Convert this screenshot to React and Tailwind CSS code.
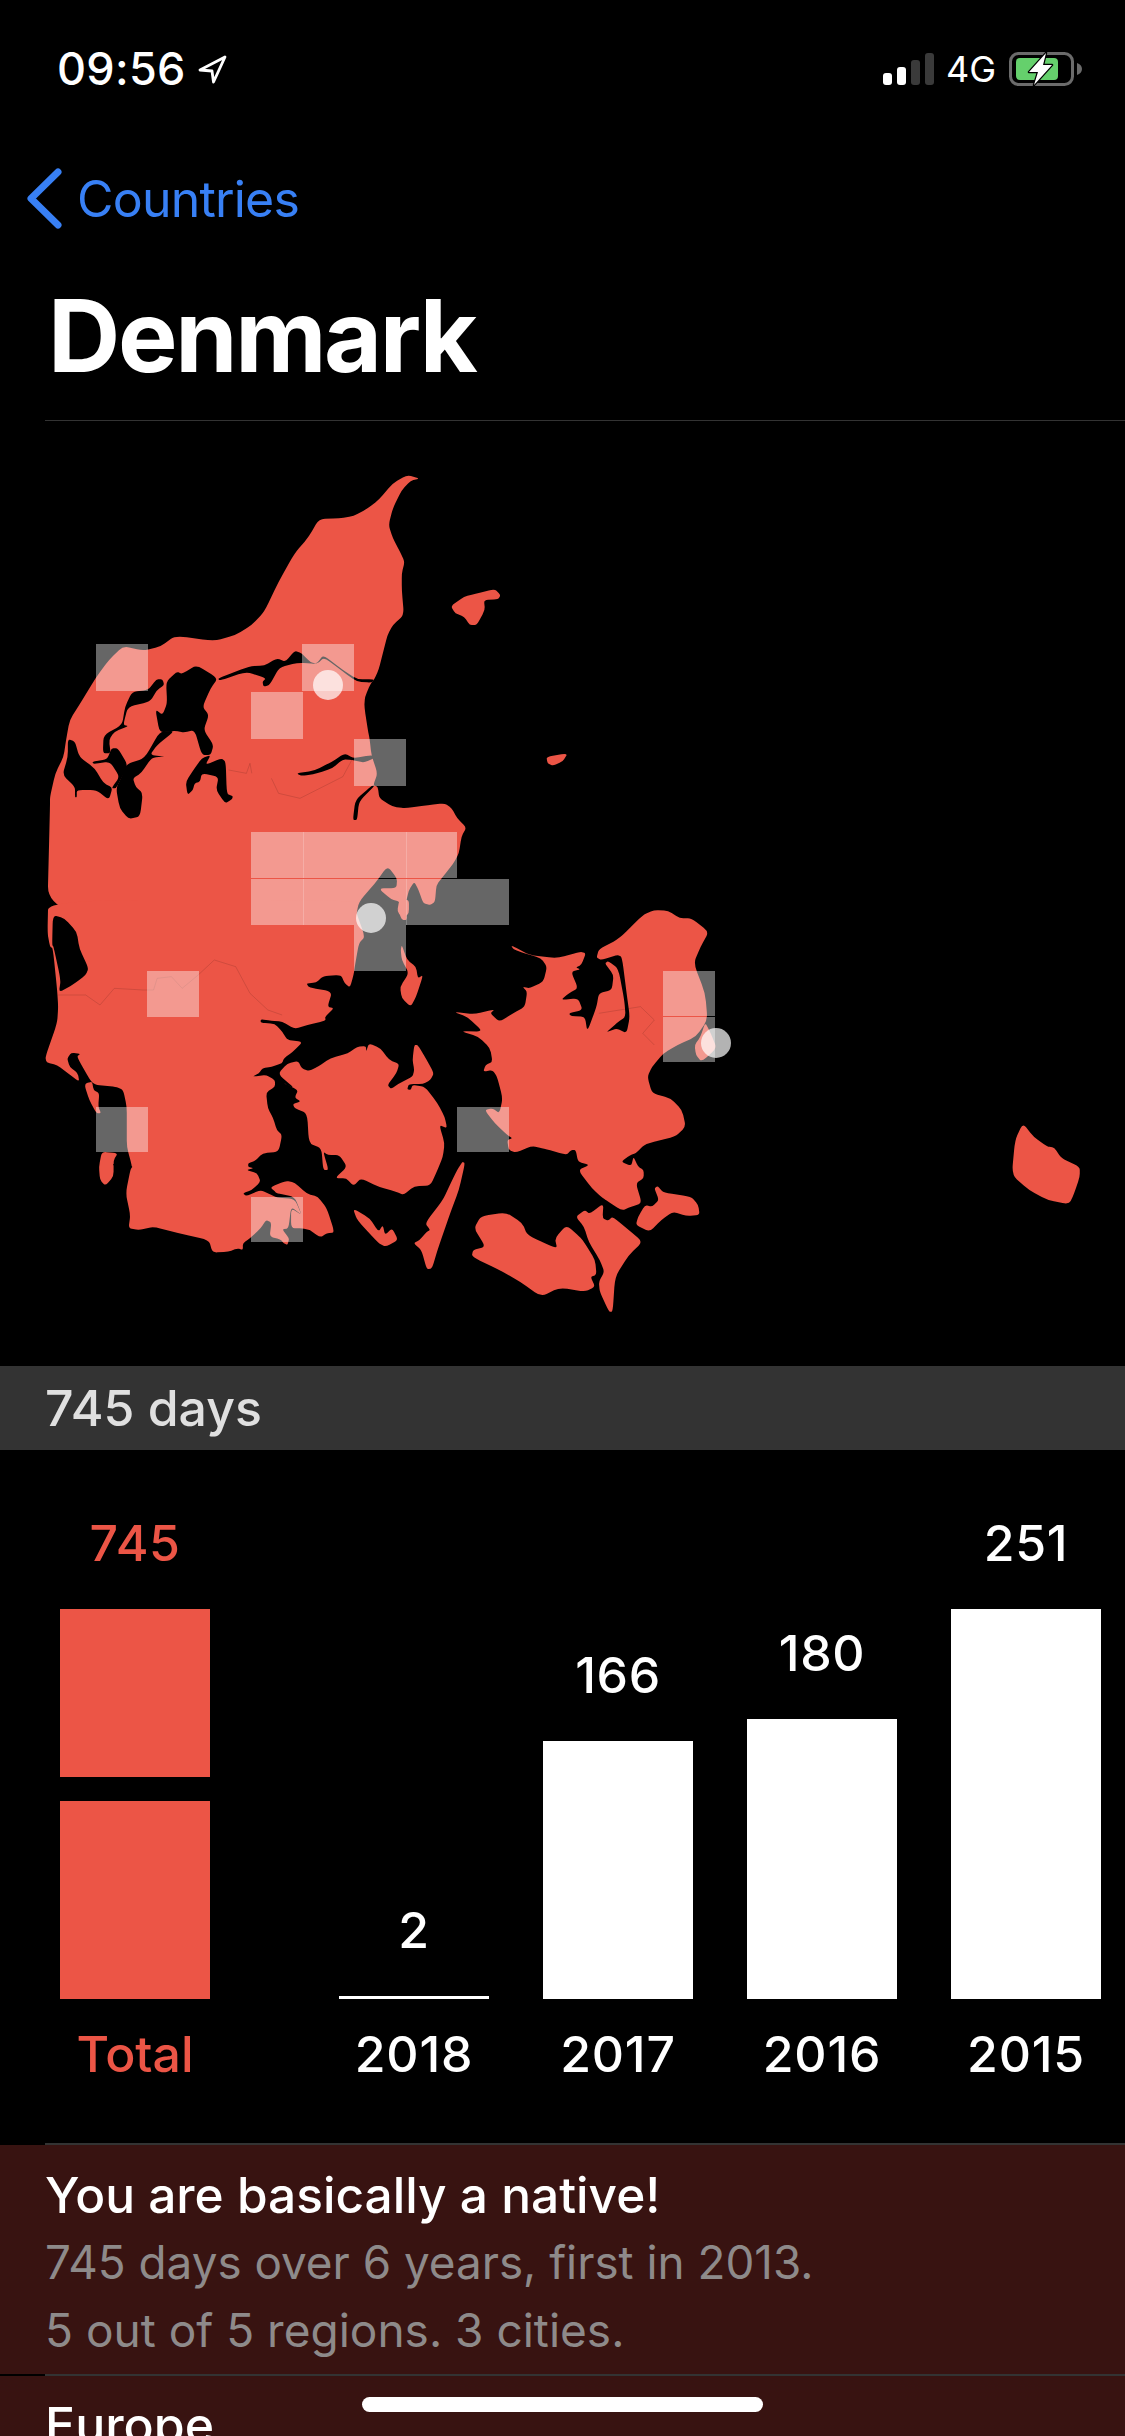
const RED = "#ec5546";

// map outlines are traced per crop, each group has its own transform
const TOP = "translate(0 440) scale(0.35714 0.33333)";
const LOW = "translate(0 900) scale(0.35714 0.33333)";
const EAST = "translate(400 860) scale(0.46243 0.33333)";

const topLand = [
  "1175,116 1150,122 1125,150 1100,205 1088,255 1100,295 1120,335 1133,365 1125,400 1125,450 1131,525 1100,555 1085,585 1072,640 1060,690 1048,718 1038,730 1022,770 1020,800 1030,870 1035,897 1040,945 1057,1000 1045,1036 1058,1040 1062,1075 1100,1100 1135,1105 1200,1095 1245,1090 1265,1105 1280,1135 1306,1162 1292,1190 1285,1240 1270,1270 1240,1310 1222,1335 1218,1385 1205,1395 1185,1390 1172,1350 1160,1325 1145,1350 1135,1395 1140,1440 1125,1440 1115,1410 1120,1385 1095,1378 1060,1345 1110,1345 1112,1315 1085,1278 1050,1330 1005,1385 995,1440 132,1440 140,1100 140,1070 155,1000 178,950 185,900 195,840 225,790 270,710 305,660 345,618 400,632 450,620 490,587 600,603 660,585 705,555 740,515 780,425 825,340 865,290 893,237 950,235 990,228 1030,205 1060,180 1100,130 1140,105",
  "1262,498 1300,470 1330,462 1385,447 1402,465 1395,478 1355,480 1358,510 1335,555 1315,555 1300,530 1275,520",
  "1530,950 1590,940 1575,965 1548,977 1533,970",
];

const topWater = [
  "610,715 550,675 510,702 495,695 465,725 468,790 455,825 435,808 447,878 490,872 515,878 545,870 565,945 590,945 598,915 570,870 585,825 567,800 590,745",
  "447,875 490,872 440,915 420,945 465,950 425,952 395,1000 372,1015 380,1040 400,1060 392,1130 360,1137 335,1105 325,1045 340,1012 355,972 405,955",
  "190,897 210,905 222,950 265,985 290,1030 315,1042 305,1080 270,1050 215,1050 215,1072 210,1072 210,1040 175,1005 190,950",
  "258,965 300,958 312,925 330,925 358,975 340,1015 325,1045 312,1045 335,1010 308,965 262,972",
  "370,755 415,750 438,718 455,718 460,735 440,750 420,785 358,800 345,855 360,858 320,875 305,900 310,940 288,940 290,885 342,855 350,800",
  "565,955 590,945 575,975 620,955 632,965 635,1062 652,1068 650,1078 630,1090 605,1050 612,1010 565,1000 560,1025 545,1030 540,1050 525,1065 520,1025 545,985",
  "610,715 700,678 740,677 775,655 800,665 825,632 845,640 870,668 888,670 905,645 960,690 1000,718 1048,718 1040,728 1000,725 960,695 908,652 888,672 835,668 782,682 755,735 738,740 735,725 745,715 690,695 615,722",
  "830,1000 880,992 930,965 965,940 990,955 1040,945 1052,952 1020,968 985,960 960,958 930,985 890,1000 845,1008",
  "1040,1038 1050,1036 1005,1085 1000,1140 988,1140 995,1080",
];

const lowLand = [
  "135,0 1005,0 995,30 1022,110 1005,130 995,190 990,225 980,262 965,250 955,225 905,228 885,248 858,250 865,262 930,275 917,320 935,325 910,350 912,362 860,375 825,387 790,365 760,362 730,358 730,368 770,372 790,395 805,420 848,425 820,455 795,475 790,490 760,500 735,505 725,520 706,530 745,525 770,540 770,560 745,578 750,625 765,655 775,690 790,705 780,755 735,760 715,782 695,790 695,800 710,805 690,810 720,820 730,845 705,870 680,880 690,888 730,870 760,885 775,893 825,897 845,945 815,920 808,985 790,988 810,1015 805,1035 795,1030 785,1018 755,1010 760,968 745,960 730,985 700,1015 680,1030 680,1050 665,1045 640,1055 595,1058 585,1020 500,1000 430,980 390,990 360,985 365,945 352,880 365,810 370,800 355,740 355,680 355,620 345,570 325,560 270,555 255,545 215,470 225,462 200,458 188,475 195,500 218,520 222,545 190,520 160,495 130,488 127,470 160,370 163,320 160,270 148,145 140,140 133,100",
  "1125,0 1145,0 1145,40 1130,55 1112,35 1118,0",
  "240,550 258,545 262,570 278,580 275,620 283,640 270,640 250,600 238,560",
  "285,755 330,760 318,780 318,830 295,857 280,840 277,800",
  "757,862 800,842 825,848 860,882 890,890 915,925 937,997 915,1000 897,1012 860,985 858,975 880,978 905,1002 850,985 815,985 815,925 845,945 825,890 775,880 770,875",
  "778,522 805,490 835,483 845,505 865,513 890,500 925,475 975,460 1000,440 1025,438 1025,455 1033,430 1065,445 1090,480 1118,492 1110,520 1085,555 1095,567 1115,552 1155,530 1160,510 1155,480 1160,435 1170,435 1195,480 1215,520 1205,540 1185,552 1145,552 1140,568 1150,570 1155,555 1190,560 1225,610 1245,650 1252,685 1230,675 1245,730 1240,770 1225,810 1205,857 1160,858 1130,885 1110,875 1060,860 1010,835 990,858 970,835 938,835 972,800 950,765 918,765 905,755 920,810 905,810 900,745 865,730 860,640 825,625 820,612 842,605 825,592 835,570 790,547 825,565",
  "1295,785 1302,790 1285,870 1262,935 1225,1050 1210,1105 1195,1108 1180,1050 1158,1030 1175,1020 1195,995 1205,990 1190,970 1240,900 1262,850 1280,810",
  "988,925 1035,955 1060,995 1072,975 1078,1005 1098,985 1115,1020 1080,1040 1060,1030 1000,960",
  "1125,135 1140,180 1165,200 1170,235 1185,225 1165,290 1150,320 1125,295 1120,260 1145,220 1125,180 1122,150",
];

const lowWater = [
  "148,45 180,55 215,95 222,145 248,205 240,225 210,250 165,278 170,240 150,140 146,135",
  "317,791 370,798 370,803 317,797",
];

const eastLand = [
  "240,255 280,285 340,295 390,275 402,280 392,315 380,322 390,328 370,335 385,385 365,400 348,420 385,415 395,450 365,460 370,468 400,470 405,515 425,440 430,400 458,390 462,345 443,310 450,303 472,325 485,420 488,470 470,488 445,518 468,505 490,520 497,470 490,400 480,290 470,285 435,300 425,293 430,268 475,235 525,165 550,150 580,152 605,175 630,175 668,215 650,260 635,310 660,400 665,480 640,530 600,555 570,580 545,620 535,650 545,700 585,715 610,750 618,800 595,830 530,852 510,880 498,885 478,905 500,918 505,890 515,920 527,930 527,955 510,970 523,1030 500,1040 480,1052 445,1020 435,1010 415,985 385,930 410,915 385,905 380,870 370,870 360,885 310,865 285,858 250,878 235,870 232,840 243,835 232,825 205,790 183,750 200,745 215,760 222,715 210,650 200,630 180,635 185,615 200,605 195,565 170,530 130,513 180,515 145,470 115,455 160,463 205,448 195,460 215,485 245,460 270,440 275,395 265,380 280,385 310,365 318,320 305,295 270,280 245,268",
  "660,487 672,520 685,565 652,605 640,585 637,555 650,530",
  "175,1068 230,1057 265,1090 275,1125 340,1167 335,1135 360,1095 392,1135 402,1155 422,1200 425,1245 412,1250 422,1280 400,1295 345,1283 305,1310 260,1265 215,1230 155,1190 158,1170 185,1160 160,1105",
  "380,1070 400,1050 410,1062 440,1030 438,1075 450,1082 460,1070 490,1105 525,1145 495,1185 465,1250 460,1355 452,1355 432,1295 430,1265 442,1235 432,1200 408,1145 398,1100",
  "510,1095 515,1070 530,1035 545,1040 560,1020 550,985 557,978 570,998 630,1010 645,1035 648,1065 620,1068 590,1055 565,1080 540,1115",
  "1347,790 1370,830 1400,860 1415,862 1430,895 1470,920 1470,950 1458,1000 1447,1033 1400,1020 1360,990 1323,945 1330,840",
];

// faint region borders on the land
const borders = [
  { transform: LOW, points: "163,285 240,285 280,315 320,265 400,270 430,270 440,235 480,230 510,265 555,225 600,180 660,200 700,280 750,330 790,345" },
  { transform: TOP, points: "985,960 960,1010 840,1075 780,1060 760,1015" },
  { transform: TOP, points: "640,990 690,1000 700,970 705,1000" },
  { transform: EAST, points: "430,460 520,440 550,480 525,520 550,555" },
];

// visited grid cells [x, y, w, h]
const cells = [
  [96, 644, 52, 47],
  [302, 644, 52, 47],
  [251, 692, 52, 47],
  [354, 739, 52, 47],
  [251, 832, 52.5, 46],
  [303, 832, 103.5, 46],
  [406, 832, 51, 46],
  [251, 879, 52.5, 46],
  [303, 879, 103.5, 46],
  [406, 879, 103, 46],
  [354, 925, 52, 46],
  [147, 971, 52, 46],
  [96, 1107, 52, 45],
  [457, 1107, 52, 45],
  [251, 1197, 52, 45],
  [663, 971, 52, 45],
  [663, 1017, 52, 45],
];

const cities = [
  [328, 685],
  [371, 918],
  [716, 1043],
];

const years = [
  { label: "2018", value: 2, height: 3 },
  { label: "2017", value: 166, height: 258 },
  { label: "2016", value: 180, height: 280 },
  { label: "2015", value: 251, height: 390 },
];

// rounds the corners of a traced outline so the coast does not look faceted
function smooth(points) {
  const pts = points.split(" ").map((p) => p.split(",").map(Number));
  const n = pts.length;
  const cut = 0.3;
  let d = "";
  pts.forEach((p, i) => {
    const prev = pts[(i + n - 1) % n];
    const next = pts[(i + 1) % n];
    const ax = p[0] + (prev[0] - p[0]) * cut;
    const ay = p[1] + (prev[1] - p[1]) * cut;
    const bx = p[0] + (next[0] - p[0]) * cut;
    const by = p[1] + (next[1] - p[1]) * cut;
    d += `${i === 0 ? "M" : "L"}${ax} ${ay}Q${p[0]} ${p[1]} ${bx} ${by}`;
  });
  return d + "Z";
}

function Shapes({ transform, items, fill }) {
  return (
    <g transform={transform} fill={fill}>
      {items.map((points, i) => (
        <path key={i} d={smooth(points)} />
      ))}
    </g>
  );
}

function DenmarkMap() {
  return (
    <svg className="block w-[1125px] h-[945px]" viewBox="0 421 1125 945">
      <Shapes transform={TOP} items={topLand} fill={RED} />
      <Shapes transform={LOW} items={lowLand} fill={RED} />
      <Shapes transform={EAST} items={eastLand} fill={RED} />
      <Shapes transform={TOP} items={topWater} fill="#000" />
      <Shapes transform={LOW} items={lowWater} fill="#000" />
      {borders.map((b, i) => (
        <polyline
          key={i}
          transform={b.transform}
          points={b.points}
          fill="none"
          stroke="#000"
          strokeOpacity="0.12"
          strokeWidth="1"
          vectorEffect="non-scaling-stroke"
        />
      ))}
      {cells.map(([x, y, w, h], i) => (
        <rect key={i} x={x} y={y} width={w} height={h} fill="#fff" fillOpacity="0.4" />
      ))}
      {cities.map(([cx, cy], i) => (
        <ellipse key={i} cx={cx} cy={cy} rx="15" ry="15" fill="#fff" fillOpacity="0.7" />
      ))}
    </svg>
  );
}

function StatusBar() {
  return (
    <div className="flex items-center justify-between h-[34px] mt-[52px] pl-[57px] pr-[43px]">
      <div className="flex items-center">
        <span className="text-[45px] leading-[34px] font-medium text-white tracking-[0.3px]">09:56</span>
        <svg className="ml-[12px]" width="29" height="29" viewBox="0 0 29 29" fill="none" stroke="#fff" strokeWidth="2.8" strokeLinejoin="round">
          <path d="M27 2 L2 15 L14 16 L15.5 27 Z" />
        </svg>
      </div>
      <div className="flex items-center">
        <div className="flex items-end gap-[5px] h-[32px]">
          <div className="w-[9px] h-[12px] rounded-[3px] bg-white" />
          <div className="w-[9px] h-[18px] rounded-[3px] bg-white" />
          <div className="w-[9px] h-[25px] rounded-[3px] bg-[#3a3a3a]" />
          <div className="w-[9px] h-[32px] rounded-[3px] bg-[#3a3a3a]" />
        </div>
        <span className="ml-[12px] text-[36px] leading-[34px] text-white">4G</span>
        <svg className="ml-[13px]" width="73" height="34" viewBox="0 0 73 34">
          <rect x="1.5" y="1.5" width="62" height="31" rx="8" fill="none" stroke="#6b6b6b" strokeWidth="3" />
          <rect x="7" y="6" width="42" height="22" rx="4" fill="#65d06c" />
          <path d="M68 11 C71 12 73 14 73 17 C73 20 71 22 68 23 Z" fill="#6b6b6b" />
          <path d="M37 1 L20 20 L29 20 L25 33 L43 13 L34 13 Z" fill="#fff" stroke="#000" strokeWidth="2.5" strokeLinejoin="round" paintOrder="stroke" />
        </svg>
      </div>
    </div>
  );
}

function BarColumn({ value, label, height }) {
  return (
    <div className="flex flex-col items-center w-[150px] ml-[54px]">
      <span className="text-[50px] leading-[60px] font-medium text-white tracking-[0.6px] mb-[36px]">{value}</span>
      <div className="w-[150px] bg-white" style={{ height }} />
      <span className="text-[50px] leading-[60px] font-medium text-white tracking-[0.8px] mt-[25px]">{label}</span>
    </div>
  );
}

export default function App() {
  return (
    <div
      className="relative w-[1125px] h-[2436px] overflow-hidden bg-black"
      style={{ fontFamily: "Inter, 'Liberation Sans', sans-serif" }}
    >
      <StatusBar />

      <div className="flex items-center h-[61px] mt-[82px] pl-[27px]">
        <svg width="35" height="61" viewBox="0 0 35 61" fill="none" stroke="#3880f5" strokeWidth="7" strokeLinecap="round" strokeLinejoin="round">
          <path d="M31 4 L4 30.5 L31 57" />
        </svg>
        <span className="ml-[15px] text-[50px] leading-[60px] text-[#3880f5] tracking-[-0.8px]">Countries</span>
      </div>

      <h1 className="mt-[57px] pl-[48px] text-[100px] leading-[100px] font-bold text-white tracking-[-2.3px]">Denmark</h1>
      <div className="mt-[34px] ml-[45px] h-[1px] bg-[#333]" />

      <DenmarkMap />

      <div className="flex items-center h-[84px] pl-[45px] bg-[#333]">
        <span className="text-[50px] leading-[60px] font-medium text-[#e0e0e0]">745 days</span>
      </div>

      <div className="flex items-end h-[693px] pb-[59px] pl-[60px]">
        <div className="flex flex-col items-center w-[150px] mr-[75px]">
          <span className="text-[50px] leading-[60px] font-medium text-[#ec5546] tracking-[0.6px] mb-[36px]">745</span>
          <div className="w-[150px] h-[168px] bg-[#ec5546]" />
          <div className="w-[150px] h-[198px] mt-[24px] bg-[#ec5546]" />
          <span className="text-[50px] leading-[60px] font-medium text-[#ec5546] mt-[25px]">Total</span>
        </div>
        {years.map((y) => (
          <BarColumn key={y.label} value={y.value} label={y.label} height={y.height} />
        ))}
      </div>

      <div className="h-[293px] bg-[#381311]">
        <div className="h-[2px] bg-black">
          <div className="ml-[45px] h-[2px] bg-[#333]" />
        </div>
        <div className="pl-[45px] pt-[20px]">
          <p className="text-[49.6px] leading-[60px] font-medium text-white">You are basically a native!</p>
          <p className="mt-[8px] text-[45.8px] leading-[60px] text-[#8e8a8a]">745 days over 6 years, first in 2013.</p>
          <p className="mt-[7px] text-[46px] leading-[60px] text-[#8e8a8a]">5 out of 5 regions. 3 cities.</p>
        </div>
        <div className="mt-[14px] h-[2px] bg-black">
          <div className="ml-[45px] h-[2px] bg-[#333]" />
        </div>
        <p className="pl-[45px] mt-[19px] text-[50px] leading-[60px] font-medium text-white">Europe</p>
      </div>

      <div className="absolute left-[362px] top-[2397px] w-[401px] h-[15px] rounded-[8px] bg-white" />
    </div>
  );
}
